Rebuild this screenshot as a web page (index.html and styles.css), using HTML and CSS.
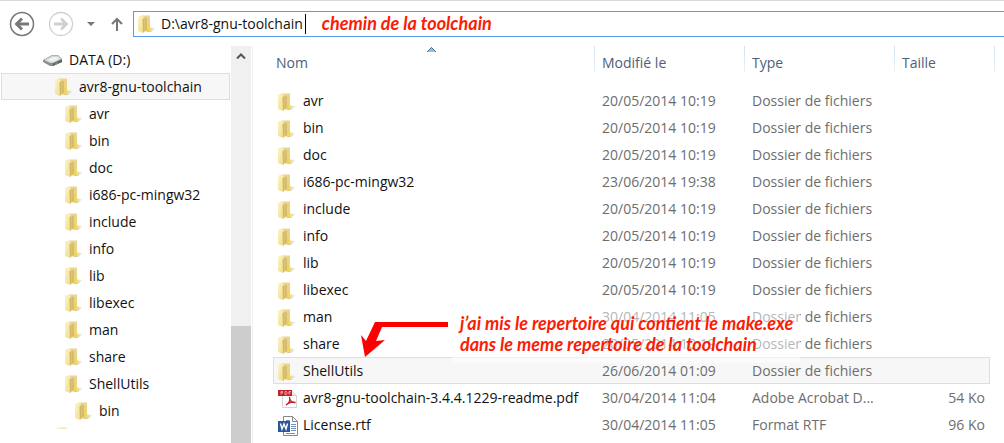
FILE: index.html
```html
<!DOCTYPE html>
<html lang="fr">
<head>
    <meta charset="UTF-8">
    <meta name="viewport" content="width=device-width, initial-scale=1.0">
    <title>avr8-gnu-toolchain</title>
    <link rel="stylesheet" href="styles.css">
</head>
<body>
    <svg class="defs" aria-hidden="true">
        <defs>
            <linearGradient id="front" x1="0" x2="1" y1="0" y2="1">
                <stop offset="0" stop-color="#fdf5c4"/>
                <stop offset="1" stop-color="#efd987"/>
            </linearGradient>
            <linearGradient id="back" x1="0" x2="0" y1="0" y2="1">
                <stop offset="0" stop-color="#e9d595"/>
                <stop offset="1" stop-color="#efd25c"/>
            </linearGradient>
            <linearGradient id="shade" x1="0" x2="1" y1="0" y2="0">
                <stop offset="0" stop-color="#9a9da6" stop-opacity=".8"/>
                <stop offset="1" stop-color="#c9ccd2" stop-opacity=".2"/>
            </linearGradient>
        </defs>
        <symbol id="folder" viewBox="0 0 18 18">
            <path d="M11 14l4.500-1.500 2 1L13 17H9z" fill="url(#shade)"/>
            <path d="M4 .5h8v15l-1 1H5z" fill="url(#back)"/>
            <path d="M6 2.500l3 .5v12l-3 1z" fill="#c9ae60" opacity=".6"/>
            <path d="M0 1.500L4 .5l2.500 2V16L5 18l-5-2z" fill="url(#front)"/>
            <path d="M4.500 4.500l2-2V16L5 18z" fill="#d0b76b"/>
            <path d="M11.500 12l2 .5v3l-2 1z" fill="#f7df63"/>
        </symbol>
        <symbol id="drive" viewBox="0 0 20 12">
            <path d="M0 6l9-5h6l4 4v3l-9 4H7L0 8z" fill="#8b8e91"/>
            <path d="M1 6l8-4.500h6L18.500 5 10 9H7z" fill="#d3d6d8"/>
            <path d="M4 6l6-3h4l2 2-6 2.500H8z" fill="#f2f2f2"/>
            <path d="M10 9.500l9-4V8l-9 4z" fill="#5c6063"/>
            <path d="M12 9.500l3-1.500v1.500l-3 1.500z" fill="#3fc43a"/>
        </symbol>
        <symbol id="pdf" viewBox="0 0 20 20">
            <path d="M4.500 1.500h9l5 5v12h-14z" fill="#fff" stroke="#d5d5d5"/>
            <path d="M13.500 1.500v5h5" fill="#eee" stroke="#ccc"/>
            <path d="M0 1h14v6H0z" fill="#c4202b"/>
            <path d="M3 5.500v-3h1.500v1.500H3M7 2.500v3h1.500l.5-1v-1l-.5-1zM11 5.500v-3h2M11 4h1.500" fill="none" stroke="#f1c4c6" stroke-width=".8"/>
            <path d="M8 16c3-2 4.500-5 3.500-8 0 4 3 6 6 5.500-3-1-7 0-9.500 2.500z" fill="none" stroke="#c4202b" stroke-width="1.300"/>
        </symbol>
        <symbol id="rtf" viewBox="0 0 20 20">
            <path d="M5.500.5h9l5 5v14h-14z" fill="#fff" stroke="#888"/>
            <path d="M14.500.5v5h5" fill="none" stroke="#888"/>
            <path d="M13 8.500h5M13 10.500h5M13 12.500h5M13 14.500h5M8 17.500h9M8 4.500h4" stroke="#6f8fc0"/>
            <path d="M0 5h12v11H0z" fill="#2b579a"/>
            <path d="M2.500 7.500L4 13l2-5 2 5 1.500-5.500" fill="none" stroke="#fff" stroke-width="1.400"/>
        </symbol>
    </svg>

    <header class="toolbar">
        <button class="nav" type="button" aria-label="Précédent">
            <svg width="26" height="26" viewBox="0 0 26 26" fill="none" stroke="#777">
                <circle cx="13" cy="13" r="11.500" stroke-width="1.500"/>
                <path d="M20 13H8M13 7.500L7.500 13l5.500 5.500" stroke-width="2.800"/>
            </svg>
        </button>
        <button class="nav" type="button" aria-label="Suivant">
            <svg width="26" height="26" viewBox="0 0 26 26" fill="none" stroke="#d0d0d0">
                <circle cx="13" cy="13" r="11.500" stroke-width="1.300"/>
                <path d="M6 13h12M13 7.500l5.500 5.500-5.500 5.500" stroke-width="2.800"/>
            </svg>
        </button>
        <button class="nav small" type="button" aria-label="Emplacements récents">
            <svg width="8" height="4" viewBox="0 0 8 4"><path d="M0 0h8L4 4z" fill="#777"/></svg>
        </button>
        <button class="nav small" type="button" aria-label="Dossier parent">
            <svg width="12" height="14" viewBox="0 0 12 14" fill="none" stroke="#777" stroke-width="2"><path d="M6 14V2M1 7l5-5 5 5"/></svg>
        </button>
        <div class="address">
            <svg class="icon"><use href="#folder"/></svg>
            <input type="text" class="path" aria-label="Adresse" value="D:\avr8-gnu-toolchain">
            <span class="caret"></span>
            <span class="note">chemin de la toolchain</span>
        </div>
    </header>

    <div class="explorer">
        <nav class="tree">
            <ul>
                <li class="root"><svg class="icon drive"><use href="#drive"/></svg>DATA (D:)</li>
                <li class="level1 selected"><svg class="icon"><use href="#folder"/></svg>avr8-gnu-toolchain</li>
                <li class="level2"><svg class="icon"><use href="#folder"/></svg>avr</li>
                <li class="level2"><svg class="icon"><use href="#folder"/></svg>bin</li>
                <li class="level2"><svg class="icon"><use href="#folder"/></svg>doc</li>
                <li class="level2"><svg class="icon"><use href="#folder"/></svg>i686-pc-mingw32</li>
                <li class="level2"><svg class="icon"><use href="#folder"/></svg>include</li>
                <li class="level2"><svg class="icon"><use href="#folder"/></svg>info</li>
                <li class="level2"><svg class="icon"><use href="#folder"/></svg>lib</li>
                <li class="level2"><svg class="icon"><use href="#folder"/></svg>libexec</li>
                <li class="level2"><svg class="icon"><use href="#folder"/></svg>man</li>
                <li class="level2"><svg class="icon"><use href="#folder"/></svg>share</li>
                <li class="level2"><svg class="icon"><use href="#folder"/></svg>ShellUtils</li>
                <li class="level3"><svg class="icon"><use href="#folder"/></svg>bin</li>
                <li class="level1 cut"><svg class="icon"><use href="#folder"/></svg></li>
            </ul>
        </nav>
        <div class="scrollbar">
            <svg width="10" height="6" viewBox="0 0 10 6" fill="none" stroke="#555" stroke-width="2"><path d="M1 5.500l4-4 4 4"/></svg>
            <div class="thumb"></div>
        </div>

        <main class="files">
            <svg class="sort" width="9" height="5" viewBox="0 0 9 5"><path d="M0 5l4.500-5L9 5z" fill="#8ec3dc"/><path d="M0 5l4.500-4.500L9 5" fill="none" stroke="#3d7390"/></svg>
            <table>
                <thead>
                    <tr>
                        <th class="name">Nom</th>
                        <th class="date">Modifié le</th>
                        <th class="type">Type</th>
                        <th class="size">Taille</th>
                    </tr>
                </thead>
                <tbody>
                    <tr><td><svg class="icon"><use href="#folder"/></svg>avr</td><td>20/05/2014 10:19</td><td>Dossier de fichiers</td><td></td></tr>
                    <tr><td><svg class="icon"><use href="#folder"/></svg>bin</td><td>20/05/2014 10:19</td><td>Dossier de fichiers</td><td></td></tr>
                    <tr><td><svg class="icon"><use href="#folder"/></svg>doc</td><td>20/05/2014 10:19</td><td>Dossier de fichiers</td><td></td></tr>
                    <tr><td><svg class="icon"><use href="#folder"/></svg>i686-pc-mingw32</td><td>23/06/2014 19:38</td><td>Dossier de fichiers</td><td></td></tr>
                    <tr><td><svg class="icon"><use href="#folder"/></svg>include</td><td>20/05/2014 10:19</td><td>Dossier de fichiers</td><td></td></tr>
                    <tr><td><svg class="icon"><use href="#folder"/></svg>info</td><td>20/05/2014 10:19</td><td>Dossier de fichiers</td><td></td></tr>
                    <tr><td><svg class="icon"><use href="#folder"/></svg>lib</td><td>20/05/2014 10:19</td><td>Dossier de fichiers</td><td></td></tr>
                    <tr><td><svg class="icon"><use href="#folder"/></svg>libexec</td><td>20/05/2014 10:19</td><td>Dossier de fichiers</td><td></td></tr>
                    <tr><td><svg class="icon"><use href="#folder"/></svg>man</td><td>30/04/2014 11:05</td><td>Dossier de fichiers</td><td></td></tr>
                    <tr><td><svg class="icon"><use href="#folder"/></svg>share</td><td>20/05/2014 10:19</td><td>Dossier de fichiers</td><td></td></tr>
                    <tr class="selected"><td><svg class="icon"><use href="#folder"/></svg>ShellUtils</td><td>26/06/2014 01:09</td><td>Dossier de fichiers</td><td></td></tr>
                    <tr><td><svg class="icon doc"><use href="#pdf"/></svg>avr8-gnu-toolchain-3.4.4.1229-readme.pdf</td><td>30/04/2014 11:04</td><td>Adobe Acrobat D...</td><td>54 Ko</td></tr>
                    <tr><td><svg class="icon doc"><use href="#rtf"/></svg>License.rtf</td><td>30/04/2014 11:05</td><td>Format RTF</td><td>96 Ko</td></tr>
                </tbody>
            </table>

            <svg class="arrow" width="88" height="36" viewBox="0 0 88 36"><path d="M88 1H15L6 20 1 14l4 22 20-17-9 1 6-14h66z" fill="#fe0000"/></svg>
            <p class="note callout">j’ai mis le repertoire qui contient le make.exe<br>dans le meme repertoire de la toolchain</p>
        </main>
    </div>
</body>
</html>
```
FILE: styles.css
```css
* {
    box-sizing: border-box;
}

body {
    margin: 0;
    height: 100vh;
    overflow: hidden;
    display: flex;
    flex-direction: column;
    background: #fff;
    color: #111;
    font-family: "Open Sans", "Noto Sans", sans-serif;
    font-size: 14px;
    line-height: 27px;
}

.defs {
    position: absolute;
    width: 0;
    height: 0;
}

.icon {
    flex: none;
    width: 18px;
    height: 18px;
}

/* toolbar */
.toolbar {
    display: flex;
    align-items: center;
    height: 46px;
    padding-left: 9px;
    border-top: 1px solid #d9d9d9;
    flex: none;
}

.nav {
    display: flex;
    margin-right: 13px;
    padding: 0;
    border: none;
    background: none;
}

.nav.small {
    margin-right: 10px;
}

.nav.small + .nav.small {
    margin-left: 6px;
}

.address {
    flex: 1;
    display: flex;
    align-items: center;
    height: 26px;
    padding-left: 4px;
    border: 1px solid #569de5;
    border-right: none;
}

.path {
    field-sizing: content;
    margin-left: 5px;
    padding: 0;
    border: none;
    outline: none;
    background: none;
    color: #111;
    font: inherit;
    line-height: 20px;
}

.caret {
    width: 1px;
    height: 20px;
    margin-left: 2px;
    background: #000;
}

.note {
    color: #fb1c05;
    font: italic bold 18px/21px Lato, sans-serif;
}

.address .note {
    margin-left: 16px;
}

/* folder tree */
.explorer {
    flex: 1;
    display: flex;
    min-height: 0;
}

.tree {
    width: 231px;
    padding: 0 1px;
    overflow: hidden;
}

.tree ul {
    margin: 0;
    padding: 0;
    list-style: none;
}

.tree li {
    display: flex;
    align-items: center;
    gap: 6px;
    height: 27px;
    border: 1px solid transparent;
}

.tree .drive {
    width: 20px;
    height: 12px;
}

.tree .root {
    padding-left: 41px;
}

.tree .level1 {
    padding-left: 53px;
}

.tree .level2 {
    padding-left: 63px;
}

.tree .level3 {
    padding-left: 73px;
}

.tree .selected {
    background: #f7f7f7;
    border-color: #dedede;
}

.tree .cut {
    align-items: flex-start;
    height: 4px;
    margin-top: 2px;
    overflow: hidden;
    opacity: .6;
}

.scrollbar {
    display: flex;
    flex-direction: column;
    align-items: center;
    justify-content: space-between;
    width: 20px;
    padding-top: 7px;
    background: #f0f0f0;
}

.thumb {
    width: 100%;
    height: 30%;
    background: #cdcdcd;
}

/* file list */
.files {
    position: relative;
    flex: 1;
    padding: 0 14px 0 20px;
    border-left: 1px solid #f0f0f0;
    margin-left: 1px;
}

.files table {
    width: 100%;
    table-layout: fixed;
    border-collapse: separate;
    border-spacing: 0;
}

.files th {
    position: relative;
    height: 41px;
    padding: 3px 8px 0;
    vertical-align: top;
    text-align: left;
    font-weight: normal;
    color: #4c607a;
}

.files th::after {
    content: "";
    position: absolute;
    top: 0;
    right: -1px;
    width: 1px;
    height: 26px;
    background: linear-gradient(#cfe1f3, #eaf2fa);
}

.files .name {
    padding-left: 3px;
}

.files .date,
.files .type {
    width: 150px;
}

.files .size {
    width: 96px;
}

.files .size::after {
    right: -5px;
}

.files td {
    height: 27px;
    padding: 0 8px;
    border: 0 solid #dedede;
    line-height: 25px;
    white-space: nowrap;
    color: #6d6d6d;
}

.files td:first-child {
    padding-left: 5px;
    color: #111;
}

.files td:last-child {
    padding: 0 5px;
    text-align: right;
}

.files td .icon {
    margin-right: 7px;
    vertical-align: middle;
}

.files td .doc {
    width: 20px;
    height: 20px;
    margin-right: 5px;
}

.files .selected td {
    border-width: 1px 0;
    background: #f7f7f7;
}

.files .selected td:first-child {
    padding-left: 4px;
    border-left-width: 1px;
}

.files .selected td:last-child {
    border-right-width: 1px;
}

.sort {
    position: absolute;
    top: 1px;
    left: 174px;
}

/* annotations over the list */
.arrow {
    position: absolute;
    top: 275px;
    left: 107px;
}

.callout {
    position: absolute;
    top: 262px;
    left: 199px;
    width: 348px;
    margin: 0;
    padding: 5px 0 8px 8px;
    background: rgba(255, 255, 255, .5);
    white-space: nowrap;
}
```
